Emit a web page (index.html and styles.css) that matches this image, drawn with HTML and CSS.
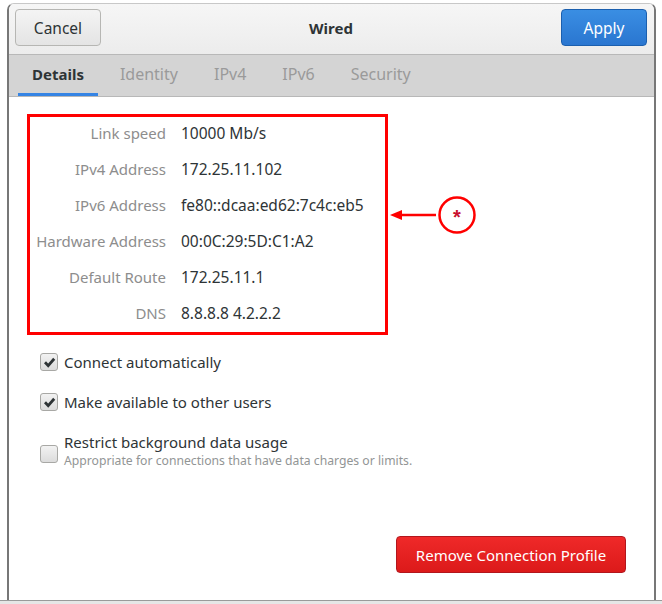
FILE: index.html
```html
<!DOCTYPE html>
<html>
<head>
<meta charset="utf-8">
<link rel="stylesheet" href="styles.css">
</head>
<body>
<div class="page">
  <div class="window">
    <div class="header">
      <button class="btn btn-cancel">Cancel</button>
      <div class="title">Wired</div>
      <button class="btn btn-apply">Apply</button>
    </div>
    <div class="tabs">
      <div class="tab active">Details</div>
      <div class="tab">Identity</div>
      <div class="tab">IPv4</div>
      <div class="tab">IPv6</div>
      <div class="tab">Security</div>
    </div>
    <div class="content">
      <div class="details-wrap">
        <div class="details">
          <div class="label">Link speed</div><div class="value">10000 Mb/s</div>
          <div class="label">IPv4 Address</div><div class="value">172.25.11.102</div>
          <div class="label">IPv6 Address</div><div class="value">fe80::dcaa:ed62:7c4c:eb5</div>
          <div class="label">Hardware Address</div><div class="value">00:0C:29:5D:C1:A2</div>
          <div class="label">Default Route</div><div class="value">172.25.11.1</div>
          <div class="label">DNS</div><div class="value">8.8.8.8 4.2.2.2</div>
        </div>
        <svg class="callout" width="100" height="44" viewBox="0 0 100 44">
          <line x1="10" y1="22" x2="50" y2="22" stroke="#ff0000" stroke-width="2.5"/>
          <polygon points="4,22 16,17 16,27" fill="#ff0000"/>
          <circle cx="71" cy="22" r="17.5" fill="#fff" stroke="#ff0000" stroke-width="2.5"/>
          <text x="71" y="31" text-anchor="middle" font-family="Liberation Sans, sans-serif" font-weight="bold" font-size="20" fill="#c8102e">*</text>
        </svg>
      </div>
      <div class="checks">
        <label class="check">
          <span class="box checked"><svg width="13" height="13" viewBox="0 0 13 13"><path d="M2 6.3 L5.2 9.6 L11.2 2.8" fill="none" stroke="#2e3436" stroke-width="2.8"/></svg></span>
          <span class="check-text">Connect automatically</span>
        </label>
        <label class="check">
          <span class="box checked"><svg width="13" height="13" viewBox="0 0 13 13"><path d="M2 6.3 L5.2 9.6 L11.2 2.8" fill="none" stroke="#2e3436" stroke-width="2.8"/></svg></span>
          <span class="check-text">Make available to other users</span>
        </label>
        <label class="check check-multi">
          <span class="box"></span>
          <span class="check-text">Restrict background data usage<span class="sub">Appropriate for connections that have data charges or limits.</span></span>
        </label>
      </div>
      <div class="actions">
        <button class="btn btn-remove">Remove Connection Profile</button>
      </div>
    </div>
  </div>
  <div class="below"></div>
</div>
</body>
</html>
```
FILE: styles.css
```css
* { box-sizing: border-box; }
html, body { margin: 0; padding: 0; background: #fff; }
body {
  font-family: "Noto Sans", "Open Sans", sans-serif;
  color: #2e3436;
  width: 662px;
  height: 604px;
  overflow: hidden;
}
.page { padding-top: 3px; }
.window {
  margin-left: 7px;
  width: 649px;
  height: 597px;
  border-left: 2px solid #777;
  border-right: 2px solid #777;
  border-top: 1px solid #c8c8c8;
  border-top-left-radius: 7px;
  border-top-right-radius: 7px;
  background: #fff;
  display: flex;
  flex-direction: column;
  overflow: hidden;
}
.below {
  height: 4px;
  border-top: 1px solid #9a9a9a;
  background: #e6e6e6;
}
.header {
  height: 51px;
  background: linear-gradient(#f6f6f6, #ececec);
  border-bottom: 1px solid #b8b8b8;
  display: flex;
  align-items: center;
  padding: 0 7px 3px 6px;
  flex-shrink: 0;
}
.title {
  flex: 1;
  text-align: center;
  font-weight: bold;
  font-size: 15px;
  color: #2e3436;
}
.btn {
  font-family: inherit;
  font-size: 15.5px;
  height: 37px;
  border-radius: 4px;
  padding: 0;
  cursor: default;
}
.btn-cancel {
  width: 86px;
  color: #2e3436;
  border: 1px solid #b6b6b3;
  background: linear-gradient(#f4f4f4, #e4e4e4);
}
.btn-apply {
  width: 86px;
  color: #fff;
  border: 1px solid #1b5fae;
  background: linear-gradient(#3a8ee3, #2a76d0);
}
.tabs {
  height: 42px;
  background: #d4d4d4;
  border-bottom: 1px solid #b8b8b8;
  display: flex;
  align-items: stretch;
  padding-left: 9px;
  flex-shrink: 0;
}
.tab {
  font-size: 16px;
  color: #9a9a9a;
  padding: 0 14px;
  margin-right: 8px;
  display: flex;
  align-items: center;
  border-bottom: 3px solid transparent;
}
.tab.active {
  color: #2e3436;
  font-weight: bold;
  font-size: 15px;
  border-bottom-color: #3584e4;
}
.content {
  flex: 1;
  display: flex;
  flex-direction: column;
  padding: 17px 28px 0 18px;
}
.details-wrap {
  position: relative;
  width: 361px;
}
.details {
  border: 3px solid #ff0000;
  display: grid;
  grid-template-columns: 136px auto;
  column-gap: 15px;
  grid-auto-rows: 36px;
  height: 221px;
  align-items: center;
}
.label, .value { padding-bottom: 4px; }
.label {
  text-align: right;
  color: #8d8d8d;
  font-size: 15px;
}
.value {
  color: #2e3436;
  font-size: 15.5px;
}
.callout {
  position: absolute;
  left: 359px;
  top: 79px;
}
.checks {
  margin-top: 18px;
  padding-left: 13px;
  display: flex;
  flex-direction: column;
  gap: 22px;
}
.check {
  display: flex;
  align-items: center;
  gap: 6px;
  font-size: 15px;
  color: #2e3436;
}
.check-multi { align-items: flex-start; }
.check-multi .box { margin-top: 12px; }
.box {
  width: 18px;
  height: 18px;
  border: 1px solid #a8a8a5;
  border-radius: 3px;
  background: linear-gradient(#f2f2f2, #dcdcdc);
  display: flex;
  align-items: center;
  justify-content: center;
  flex-shrink: 0;
}
.check-text { display: flex; flex-direction: column; line-height: 18px; }
.sub {
  font-size: 12.2px;
  color: #929595;
  line-height: 16px;
  margin-top: 2px;
}
.actions {
  margin-top: auto;
  margin-bottom: 27px;
  display: flex;
  justify-content: flex-end;
}
.btn-remove {
  width: 230px;
  color: #fff;
  border: 1px solid #b2161d;
  background: linear-gradient(#ef2929, #dc1a1a);
  font-size: 15px;
}
```
